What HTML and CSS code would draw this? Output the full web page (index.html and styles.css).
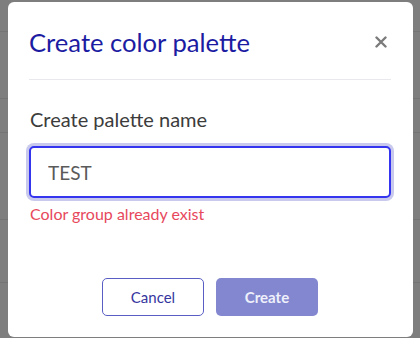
FILE: index.html
```html
<!DOCTYPE html>
<html lang="en">
<head>
    <meta charset="UTF-8">
    <meta name="viewport" content="width=device-width, initial-scale=1.0">
    <title>Create color palette</title>
    <link rel="stylesheet" href="styles.css">
</head>
<body>
    <div class="page">
        <div class="row row-top"></div>
        <div class="row row-head"></div>
        <div class="row row-a"></div>
        <div class="row row-b"></div>
        <div class="row row-c"></div>
        <div class="row"></div>
    </div>

    <div class="overlay">
        <div class="modal">
            <div class="modal-header">
                <h1>Create color palette</h1>
                <button class="close" aria-label="Close">
                    <svg width="12" height="12" viewBox="0 0 12 12">
                        <path d="M1.5 1.5 L10.5 10.5 M10.5 1.5 L1.5 10.5" stroke="#7b7b7b" stroke-width="2.4" stroke-linecap="round"/>
                    </svg>
                </button>
            </div>
            <form class="modal-body">
                <label for="palette-name">Create palette name</label>
                <input type="text" id="palette-name" value="TEST">
                <div class="error">Color group already exist</div>
            </form>
            <div class="modal-footer">
                <button class="btn btn-outline">Cancel</button>
                <button class="btn btn-primary">Create</button>
            </div>
        </div>
    </div>
</body>
</html>
```

FILE: styles.css
```css
body {
    font-family: Lato, 'Open Sans', sans-serif;
    margin: 0;
    background-color: #7e7e7e;
    height: 338px;
    overflow: hidden;
}
.page {
    display: flex;
    flex-direction: column;
}
.row {
    border-bottom: 1px solid #747474;
    height: 66px;
}
.row-top {
    height: 31px;
}
.row-head {
    height: 66px;
}
.row-a {
    height: 33px;
}
.row-b {
    height: 86px;
}
.row-c {
    height: 62px;
}
.overlay {
    position: fixed;
    inset: 0;
    padding: 2px 0 0 8px;
}
.modal {
    width: 405px;
    height: 335px;
    box-sizing: border-box;
    background: white;
    border-radius: 6px;
    padding: 0 22px 21px 21px;
    display: flex;
    flex-direction: column;
}
.modal-header {
    display: flex;
    justify-content: space-between;
    align-items: center;
    padding: 24px 0 21px;
    border-bottom: 1px solid #e8e9ed;
}
h1 {
    margin: 0;
    font-size: 25.6px;
    line-height: 32px;
    font-weight: 400;
    color: #1c1ca2;
}
.close {
    background: none;
    border: none;
    padding: 0;
    margin-right: 4px;
    width: 12px;
    height: 12px;
    display: flex;
    cursor: pointer;
}
.modal-body {
    padding-top: 26px;
    display: flex;
    flex-direction: column;
}
label {
    font-size: 20px;
    line-height: 26px;
    color: #3c3c3c;
    margin-left: 1px;
}
input {
    margin-top: 14px;
    height: 52px;
    box-sizing: border-box;
    border: 2px solid #3535f0;
    border-radius: 5px;
    box-shadow: 0 0 0 3px #c8c9ec;
    padding: 0 17px;
    font-family: inherit;
    font-size: 19px;
    color: #5a5a5a;
    outline: none;
}
.error {
    margin-top: 6px;
    margin-left: 1px;
    font-size: 16px;
    line-height: 20px;
    color: #e7485c;
}
.modal-footer {
    margin-top: auto;
    display: flex;
    justify-content: center;
    gap: 12px;
}
.btn {
    width: 102px;
    height: 38px;
    border-radius: 5px;
    font-family: inherit;
    font-size: 15px;
    cursor: pointer;
}
.btn-outline {
    background: white;
    border: 1.5px solid #5a5ec4;
    color: #3636a0;
}
.btn-primary {
    background: #8387cf;
    border: none;
    color: #eef0fb;
    font-weight: 700;
}
```
